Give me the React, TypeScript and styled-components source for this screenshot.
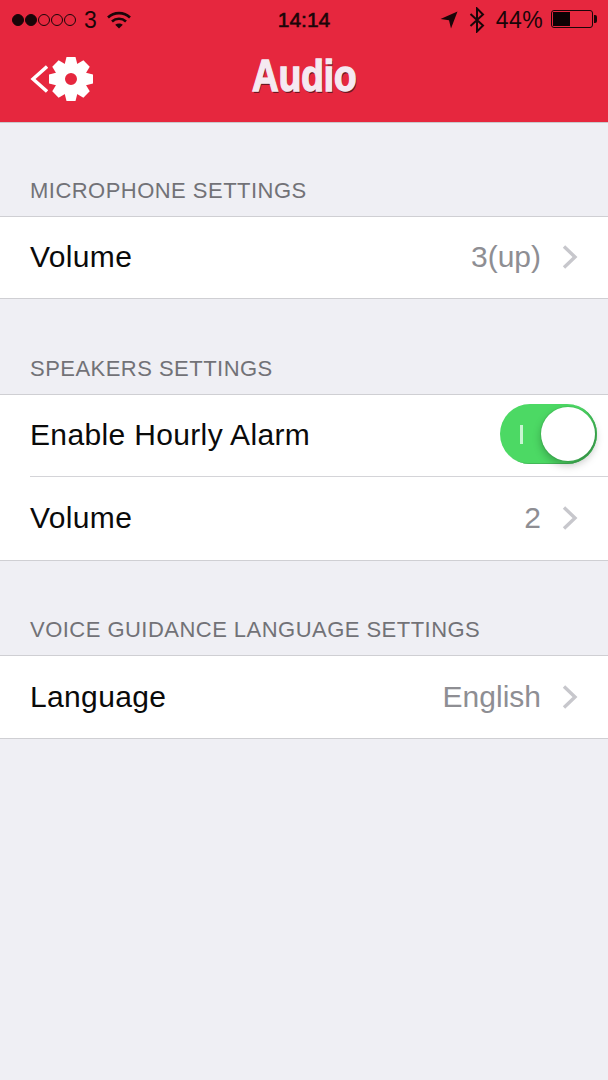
import styled, { createGlobalStyle } from "styled-components";

const Global = createGlobalStyle`
  html, body { margin: 0; padding: 0; background: #efeff4; }
  body { font-family: "Liberation Sans", Arial, sans-serif; }
`;

const Page = styled.div`
  width: 608px;
  height: 1080px;
  background: #efeff4;
  overflow: hidden;
`;

const Header = styled.header`
  height: 122px;
  background: #e6273e;
  border-bottom: 1px solid #c9c9cc;
  display: flex;
  flex-direction: column;
`;

const StatusBar = styled.div`
  height: 40px;
  display: grid;
  grid-template-columns: 1fr auto 1fr;
  align-items: center;
  padding: 0 15px 0 12px;
  color: #1a0508;
  font-size: 23px;
`;

const StatusLeft = styled.div`
  display: flex;
  align-items: center;
`;

const StatusRight = styled.div`
  display: flex;
  align-items: center;
  justify-content: flex-end;
  gap: 11px;
`;

const Dots = styled.div`
  display: flex;
  gap: 1px;
`;

const Dot = styled.span<{ $on?: boolean }>`
  width: 12px;
  height: 12px;
  box-sizing: border-box;
  border-radius: 50%;
  border: 1px solid #1a0508;
  background: ${(p) => (p.$on ? "#1a0508" : "transparent")};
`;

const Carrier = styled.span`
  margin: 0 10px 0 8px;
`;

const Clock = styled.span`
  margin-left: 3px;
  font-size: 21px;
  -webkit-text-stroke: 0.6px #1a0508;
`;

const Percent = styled.span`
  margin-right: -3px;
  letter-spacing: 0.4px;
`;

const Battery = styled.div`
  width: 42px;
  height: 18px;
  margin-bottom: 2px;
  box-sizing: border-box;
  border: 1px solid #1a0508;
  border-radius: 3px;
  padding: 1px;
  position: relative;
  &::after {
    content: "";
    position: absolute;
    right: -5px;
    top: 4px;
    width: 3px;
    height: 8px;
    background: #1a0508;
    border-radius: 0 2px 2px 0;
  }
`;

const BatteryFill = styled.div`
  height: 100%;
  background: #0d0204;
`;

const NavBar = styled.div`
  flex: 1;
  position: relative;
  display: flex;
  align-items: center;
  justify-content: center;
  padding-bottom: 10px;
`;

const BackButton = styled.div`
  position: absolute;
  left: 30px;
  top: 16px;
  display: flex;
  align-items: center;
`;

const Title = styled.h1`
  margin: 0;
  color: #f5e9f1;
  font-family: "Liberation Sans", sans-serif;
  font-size: 44px;
  font-weight: 700;
  -webkit-text-stroke: 1.5px #f5e9f1;
  text-shadow: 1px 2px 0 #6d1722;
  transform: scaleX(0.84);
`;

const SectionLabel = styled.div<{ $height: number }>`
  height: ${(p) => p.$height}px;
  box-sizing: border-box;
  padding: 0 0 13px 30px;
  display: flex;
  align-items: flex-end;
  color: #727277;
  font-size: 22px;
  letter-spacing: 0.47px;
  line-height: 25px;
`;

const Group = styled.section`
  background: #fff;
  border-top: 1px solid #cfcfd3;
  border-bottom: 1px solid #cfcfd3;
`;

const Row = styled.div<{ $height: number }>`
  height: ${(p) => p.$height}px;
  box-sizing: border-box;
  display: flex;
  align-items: center;
  justify-content: space-between;
  padding: 0 30px 1px 30px;
`;

const Divider = styled.div`
  height: 1px;
  margin-left: 30px;
  background: #d4d4d8;
`;

const RowLabel = styled.span`
  font-size: 30px;
  letter-spacing: 0.35px;
  color: #0a0a0a;
`;

const RowValue = styled.div`
  display: flex;
  align-items: center;
  gap: 20px;
  color: #8e8e93;
  font-size: 30px;
`;

const Toggle = styled.div`
  width: 97px;
  height: 60px;
  margin: 0 -19px 2px 0;
  box-sizing: border-box;
  border-radius: 30px;
  background: #4cd964;
  position: relative;
  display: flex;
  align-items: center;
  padding-left: 20px;
  box-shadow: inset -2px -1px 0 #43b858;
`;

const ToggleMark = styled.span`
  width: 3px;
  height: 19px;
  background: #c8f5d2;
`;

const Knob = styled.span`
  position: absolute;
  right: 2px;
  top: 3px;
  width: 54px;
  height: 54px;
  border-radius: 50%;
  background: #fff;
  box-shadow: 0 4px 8px rgba(0, 0, 0, 0.26), 0 0 0 1px rgba(0, 0, 0, 0.06);
`;

const Chevron = () => (
  <svg width="17" height="26" viewBox="0 0 17 26" fill="none">
    <path d="M3 2.5 L14 13 L3 23.5" stroke="#c7c7cc" strokeWidth="3.4" />
  </svg>
);

const Wifi = () => (
  <svg width="24" height="18" viewBox="0 0 24 18" fill="none" stroke="#1a0508" strokeWidth="2.6">
    <path d="M1 6.5 C7 0.7 17 0.7 23 6.5" />
    <path d="M5 10.5 C9 6.8 15 6.8 19 10.5" />
    <path d="M12 17.5 L8.2 13.8 C10.4 12 13.6 12 15.8 13.8 Z" fill="#1a0508" stroke="none" />
  </svg>
);

const LocationArrow = () => (
  <svg width="18" height="18" viewBox="0 0 18 18">
    <path d="M17.5 0.5 L0.5 8 L9 9.2 L11 17.5 Z" fill="#1a0508" />
  </svg>
);

const Bluetooth = () => (
  <svg width="16" height="26" viewBox="0 0 16 26" fill="none" stroke="#1a0508" strokeWidth="2">
    <path d="M1.5 7 L14 18.5 L8 24.5 L8 1.5 L14 7.5 L1.5 19" />
  </svg>
);

const Gear = () => {
  const teeth = [0, 45, 90, 135, 180, 225, 270, 315];
  return (
    <svg width="46" height="46" viewBox="0 0 46 46">
      {teeth.map((a) => (
        <polygon key={a} points="18.5,1 27.5,1 30,11 16,11" fill="#fff" transform={`rotate(${a} 23 23)`} />
      ))}
      <circle cx="23" cy="23" r="11" fill="none" stroke="#fff" strokeWidth="10" />
    </svg>
  );
};

const BackArrow = () => (
  <svg width="18" height="30" viewBox="0 0 18 30" fill="none">
    <path d="M17 2.5 L3 15 L17 27.5" stroke="#fff" strokeWidth="3.4" />
  </svg>
);

const App = () => (
  <Page>
    <Global />
    <Header>
      <StatusBar>
        <StatusLeft>
          <Dots>
            <Dot $on />
            <Dot $on />
            <Dot />
            <Dot />
            <Dot />
          </Dots>
          <Carrier>3</Carrier>
          <Wifi />
        </StatusLeft>
        <Clock>14:14</Clock>
        <StatusRight>
          <LocationArrow />
          <Bluetooth />
          <Percent>44%</Percent>
          <Battery>
            <BatteryFill style={{ width: "46%" }} />
          </Battery>
        </StatusRight>
      </StatusBar>
      <NavBar>
        <BackButton>
          <BackArrow />
          <Gear />
        </BackButton>
        <Title>Audio</Title>
      </NavBar>
    </Header>
    <SectionLabel $height={93}>MICROPHONE SETTINGS</SectionLabel>
    <Group>
      <Row $height={81}>
        <RowLabel>Volume</RowLabel>
        <RowValue>
          3(up)
          <Chevron />
        </RowValue>
      </Row>
    </Group>
    <SectionLabel $height={95}>SPEAKERS SETTINGS</SectionLabel>
    <Group>
      <Row $height={81}>
        <RowLabel>Enable Hourly Alarm</RowLabel>
        <Toggle>
          <ToggleMark />
          <Knob />
        </Toggle>
      </Row>
      <Divider />
      <Row $height={83}>
        <RowLabel>Volume</RowLabel>
        <RowValue>
          2
          <Chevron />
        </RowValue>
      </Row>
    </Group>
    <SectionLabel $height={94}>VOICE GUIDANCE LANGUAGE SETTINGS</SectionLabel>
    <Group>
      <Row $height={82}>
        <RowLabel>Language</RowLabel>
        <RowValue>
          English
          <Chevron />
        </RowValue>
      </Row>
    </Group>
  </Page>
);

export default App;
